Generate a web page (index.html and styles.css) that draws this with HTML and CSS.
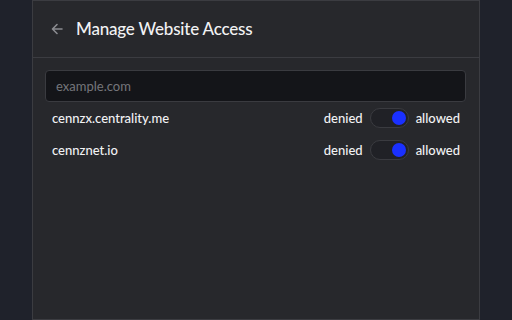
FILE: index.html
```html
<!DOCTYPE html>
<html lang="en">
<head>
    <meta charset="UTF-8">
    <meta name="viewport" content="width=device-width, initial-scale=1.0">
    <title>Manage Website Access</title>
    <link rel="stylesheet" href="styles.css">
</head>
<body>

<div class="panel">
    <div class="header">
        <svg class="back" width="12" height="12" viewBox="0 0 12 12">
            <path d="M11 6H1.8M6 1.5L1.5 6L6 10.5" fill="none" stroke="#8a8b90" stroke-width="1.6" stroke-linecap="round" stroke-linejoin="round"/>
        </svg>
        <h1>Manage Website Access</h1>
    </div>

    <div class="content">
        <input type="text" class="search" placeholder="example.com">

        <ul class="sites">
            <li class="site">
                <span class="name">cennzx.centrality.me</span>
                <span class="switch">
                    <span>denied</span>
                    <span class="toggle"><span class="knob"></span></span>
                    <span>allowed</span>
                </span>
            </li>
            <li class="site">
                <span class="name">cennznet.io</span>
                <span class="switch">
                    <span>denied</span>
                    <span class="toggle"><span class="knob"></span></span>
                    <span>allowed</span>
                </span>
            </li>
        </ul>
    </div>
</div>

</body>
</html>
```

FILE: styles.css
```css
html, body { height: 100%; }
body { margin: 0; background: #1f222b; font-family: Lato, "Open Sans", sans-serif; color: #f2f2f4; }
.panel { box-sizing: border-box; width: 448px; height: 320px; margin-left: 32px; background: #27282c; border: 1px solid #3b3c41; }
.header { display: flex; align-items: center; height: 56px; padding-left: 18px; border-bottom: 1px solid #3b3c41; }
.back { margin-right: 13px; }
h1 { margin: 0 0 1px; font-size: 17px; font-weight: 500; letter-spacing: -0.2px; }
.content { padding: 12px 13px 0 12px; }
.search { box-sizing: border-box; width: 100%; height: 32px; padding: 0 10px; background: #141519; border: 1px solid #3a3b40; border-radius: 4px; font-family: inherit; font-size: 13px; color: #ddd; }
.search::placeholder { color: #75767b; }
.sites { list-style: none; margin: 0; padding: 0; }
.site { display: flex; justify-content: space-between; align-items: center; height: 32px; padding: 0 6px 0 7px; font-size: 13px; font-weight: 500; }
.switch { display: flex; align-items: center; gap: 7px; }
.toggle { box-sizing: border-box; width: 39px; height: 20px; border: 1px solid #3a3b40; border-radius: 10px; background: #202126; position: relative; }
.knob { position: absolute; right: 2px; top: 2px; width: 14px; height: 14px; border-radius: 50%; background: #1a30ff; }
```
